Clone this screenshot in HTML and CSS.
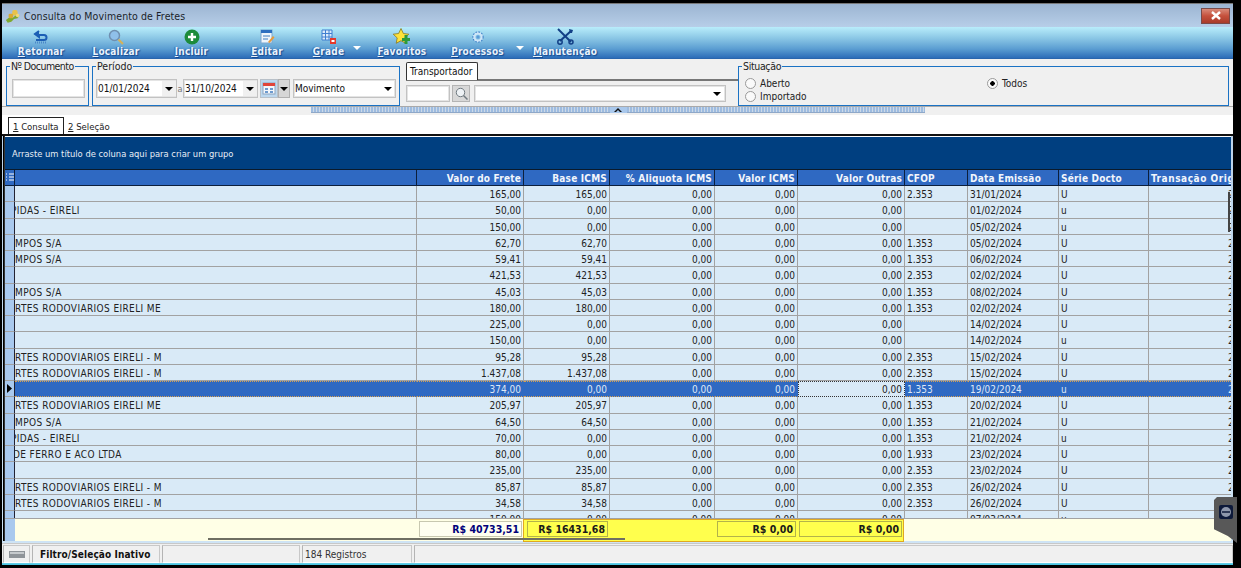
FILE: index.html
```html
<!DOCTYPE html>
<html lang="pt">
<head>
<meta charset="utf-8">
<title>Consulta do Movimento de Fretes</title>
<link rel="stylesheet" href="styles.css">
</head>
<body>
<div class="window">
  <header class="titlebar">
    <svg class="title-icon" width="18" height="15" viewBox="0 0 20 16"><path d="M1 13l5-4 2 2 5-4 3 1-2 3-4 1-3 3-4 1z" fill="#7fa82e"/><rect x="8" y="2" width="6" height="6" rx="2" fill="#e9c24a"/><rect x="4" y="6" width="5" height="5" rx="1.5" fill="#d9a92f"/><circle cx="14" cy="8" r="2" fill="#f0d878"/></svg>
    <span class="title-text">Consulta do Movimento de Fretes</span>
    <span class="close"><svg width="12" height="9" viewBox="0 0 12 9"><path d="M2 1l8 7M10 1l-8 7" stroke="#fff" stroke-width="2.4"/></svg></span>
  </header>

  <nav class="toolbar">
    <div class="tool w74"><svg width="16" height="15" viewBox="0 0 16 15"><path d="M6 1L2 4l4 3V5h5a2.500 2.500 0 0 1 0 5H3" fill="none" stroke="#1d5fb5" stroke-width="2"/><path d="M1 4l5-3v6z" fill="#1d5fb5"/><path d="M2 12.500h11" stroke="#4a86c8" stroke-width="2" stroke-dasharray="1 1"/></svg><span><u>R</u>etornar</span></div>
    <div class="tool w76"><svg width="16" height="16" viewBox="0 0 16 16"><circle cx="6.500" cy="6.500" r="5" fill="#8fc0ea" stroke="#6f8fb0" stroke-width="1.500"/><path d="M10.500 10.500L15 15" stroke="#d3b25a" stroke-width="2.200"/></svg><span><u>L</u>ocalizar</span></div>
    <div class="tool w75"><svg width="16" height="16" viewBox="0 0 16 16"><circle cx="8" cy="8" r="7.500" fill="#1d8b3b"/><path d="M8 4v8M4 8h8" stroke="#fff" stroke-width="2.400"/></svg><span><u>I</u>ncluir</span></div>
    <div class="tool w76"><svg width="16" height="16" viewBox="0 0 16 16"><rect x="2" y="1" width="11" height="13" fill="#eef5fb" stroke="#7da6cf"/><rect x="2" y="1" width="11" height="3" fill="#2d6fc0"/><path d="M4 7h7M4 10h5" stroke="#3f7cc0"/><path d="M9 13l5-6 1.500 1.500-5 5.500z" fill="#e8993a"/></svg><span><u>E</u>ditar</span></div>
    <div class="tool w47"><svg width="16" height="16" viewBox="0 0 16 16"><path d="M1 1h10v10H1z" fill="#dbeafa" stroke="#3f7fd0"/><path d="M4.500 1v10M8 1v10M1 4.500h10M1 8h10" stroke="#3f7fd0"/><rect x="9" y="9" width="6" height="6" fill="#e5382a"/><rect x="10.500" y="11" width="3" height="2" fill="#fff"/></svg><span><u>G</u>rade</span></div>
    <div class="drop"></div>
    <div class="tool w76"><svg width="18" height="17" viewBox="0 0 18 17"><path d="M8 .5l2.400 5 5.400.7-4 3.700 1 5.400L8 12.700 3.200 15.300l1-5.400-4-3.700 5.400-.7z" fill="#ffe23a" stroke="#8a7a20" stroke-width=".8"/><path d="M13 7v9M9 11.500h8" stroke="#2c9a3c" stroke-width="3"/></svg><span><u>F</u>avoritos</span></div>
    <div class="tool w75"><svg class="gear" width="12" height="12" viewBox="0 0 14 14"><circle cx="7" cy="7" r="4.500" fill="none" stroke="#cfe6f8" stroke-width="3"/><circle cx="7" cy="7" r="6" fill="none" stroke="#3d80c8" stroke-width="1.200" stroke-dasharray="2 1.500"/><circle cx="7" cy="7" r="2" fill="#5a9ad8"/></svg><span><u>P</u>rocessos</span></div>
    <div class="drop w14"></div>
    <div class="tool w72"><svg width="17" height="17" viewBox="0 0 17 17"><path d="M1 1l13 13" stroke="#123f86" stroke-width="2"/><circle cx="14" cy="14" r="2" fill="none" stroke="#123f86" stroke-width="1.500"/><path d="M14 3L3 13" stroke="#123f86" stroke-width="2"/><circle cx="3" cy="14" r="2.200" fill="none" stroke="#123f86" stroke-width="1.500"/><path d="M12 1l4 1-1 3-2 0z" fill="#123f86"/></svg><span><u>M</u>anutenção</span></div>
  </nav>

  <section class="filters">
    <fieldset class="group g-doc"><legend>Nº Documento</legend><span class="input w73i"></span></fieldset>
    <fieldset class="group g-per"><legend>Período</legend>
      <div class="per-row">
        <span class="input date d1">01/01/2024<i class="caret"></i></span>
        <span class="sep">a</span>
        <span class="input date d2">31/10/2024<i class="caret"></i></span>
        <span class="cal"><svg width="14" height="13" viewBox="0 0 14 13"><rect x="1" y="1" width="12" height="11" fill="#f4f7fb" stroke="#8ca4c0"/><rect x="1" y="1" width="12" height="3" fill="#e0453a"/><path d="M3 7h3M8 7h3M3 10h3M8 10h3" stroke="#3f7cc0" stroke-width="1.500"/></svg></span>
        <span class="cal-drop"><i class="caret"></i></span>
        <span class="input mov">Movimento<i class="caret"></i></span>
      </div>
    </fieldset>
    <div class="transp">
      <div class="transp-tabs"><span class="transp-tab">Transportador</span></div>
      <div class="transp-row">
        <span class="input t-code"></span>
        <span class="lookup"><svg width="13" height="13" viewBox="0 0 13 13"><circle cx="5.500" cy="5.500" r="4.200" fill="#eef2f5" stroke="#707a80"/><path d="M8.500 8.500L12.500 12.500" stroke="#707a80" stroke-width="1.500"/></svg></span>
        <span class="input t-name"><i class="caret"></i></span>
      </div>
    </div>
    <fieldset class="group g-sit"><legend>Situação</legend>
      <div class="sit-col">
        <label class="radio"><i class="dot"></i>Aberto</label>
        <label class="radio"><i class="dot"></i>Importado</label>
      </div>
      <label class="radio todos"><i class="dot on"></i>Todos</label>
    </fieldset>
  </section>

  <div class="splitter"><div class="split-bar"><span class="grip"></span><span class="split-btn"><svg width="8" height="5" viewBox="0 0 8 5"><path d="M4 0l4 4H6L4 2 2 4H0z" fill="#111"/></svg></span><span class="grip"></span></div></div>

  <div class="tabs">
    <span class="tab active"><u>1</u> Consulta</span>
    <span class="tab"><u>2</u> Seleção</span>
  </div>

  <main class="grid">
    <div class="groupbar">Arraste um título de coluna aqui para criar um grupo</div>
    <div class="row head"><span class="ind"><svg width="8" height="9" viewBox="0 0 8 9"><path d="M0 1h1M0 4h1M0 7h1M3 1h5M3 4h5M3 7h5" stroke="#fff"/></svg></span><span></span><span>Valor do Frete</span><span>Base ICMS</span><span>% Aliquota ICMS</span><span>Valor ICMS</span><span>Valor Outras</span><span>CFOP</span><span>Data Emissão</span><span>Série Docto</span><span class="clipl">Transação Origem</span></div>
    <div class="rows">
      <div class="row"><span class="ind"></span><span></span><span>165,00</span><span>165,00</span><span>0,00</span><span>0,00</span><span>0,00</span><span>2.353</span><span>31/01/2024</span><span>U</span><span class="last">2</span></div>
      <div class="row"><span class="ind"></span><span class="cut">PIDAS - EIRELI</span><span>50,00</span><span>0,00</span><span>0,00</span><span>0,00</span><span>0,00</span><span></span><span>01/02/2024</span><span>u</span><span class="last">2</span></div>
      <div class="row"><span class="ind"></span><span></span><span>150,00</span><span>0,00</span><span>0,00</span><span>0,00</span><span>0,00</span><span></span><span>05/02/2024</span><span>u</span><span class="last">2</span></div>
      <div class="row"><span class="ind"></span><span>MPOS S/A</span><span>62,70</span><span>62,70</span><span>0,00</span><span>0,00</span><span>0,00</span><span>1.353</span><span>05/02/2024</span><span>U</span><span class="last">2</span></div>
      <div class="row"><span class="ind"></span><span>MPOS S/A</span><span>59,41</span><span>59,41</span><span>0,00</span><span>0,00</span><span>0,00</span><span>1.353</span><span>06/02/2024</span><span>U</span><span class="last">2</span></div>
      <div class="row"><span class="ind"></span><span></span><span>421,53</span><span>421,53</span><span>0,00</span><span>0,00</span><span>0,00</span><span>2.353</span><span>02/02/2024</span><span>U</span><span class="last">2</span></div>
      <div class="row"><span class="ind"></span><span>MPOS S/A</span><span>45,03</span><span>45,03</span><span>0,00</span><span>0,00</span><span>0,00</span><span>1.353</span><span>08/02/2024</span><span>U</span><span class="last">2</span></div>
      <div class="row"><span class="ind"></span><span>RTES RODOVIARIOS EIRELI ME</span><span>180,00</span><span>180,00</span><span>0,00</span><span>0,00</span><span>0,00</span><span>1.353</span><span>02/02/2024</span><span>U</span><span class="last">2</span></div>
      <div class="row"><span class="ind"></span><span></span><span>225,00</span><span>0,00</span><span>0,00</span><span>0,00</span><span>0,00</span><span></span><span>14/02/2024</span><span>U</span><span class="last">2</span></div>
      <div class="row"><span class="ind"></span><span></span><span>150,00</span><span>0,00</span><span>0,00</span><span>0,00</span><span>0,00</span><span></span><span>14/02/2024</span><span>u</span><span class="last">2</span></div>
      <div class="row"><span class="ind"></span><span>RTES RODOVIARIOS EIRELI - M</span><span>95,28</span><span>95,28</span><span>0,00</span><span>0,00</span><span>0,00</span><span>2.353</span><span>15/02/2024</span><span>U</span><span class="last">2</span></div>
      <div class="row"><span class="ind"></span><span>RTES RODOVIARIOS EIRELI - M</span><span>1.437,08</span><span>1.437,08</span><span>0,00</span><span>0,00</span><span>0,00</span><span>2.353</span><span>15/02/2024</span><span>U</span><span class="last">2</span></div>
      <div class="row sel"><span class="ind"><svg width="5" height="9" viewBox="0 0 5 9"><path d="M0 0l5 4.500L0 9z" fill="#000"/></svg></span><span></span><span>374,00</span><span>0,00</span><span>0,00</span><span>0,00</span><span class="focus">0,00</span><span>1.353</span><span>19/02/2024</span><span>u</span><span class="last">2</span></div>
      <div class="row"><span class="ind"></span><span>RTES RODOVIARIOS EIRELI ME</span><span>205,97</span><span>205,97</span><span>0,00</span><span>0,00</span><span>0,00</span><span>1.353</span><span>20/02/2024</span><span>U</span><span class="last">2</span></div>
      <div class="row"><span class="ind"></span><span>MPOS S/A</span><span>64,50</span><span>64,50</span><span>0,00</span><span>0,00</span><span>0,00</span><span>1.353</span><span>21/02/2024</span><span>U</span><span class="last">2</span></div>
      <div class="row"><span class="ind"></span><span class="cut">PIDAS - EIRELI</span><span>70,00</span><span>0,00</span><span>0,00</span><span>0,00</span><span>0,00</span><span>1.353</span><span>21/02/2024</span><span>u</span><span class="last">2</span></div>
      <div class="row"><span class="ind"></span><span class="cut2">DE FERRO E ACO LTDA</span><span>80,00</span><span>0,00</span><span>0,00</span><span>0,00</span><span>0,00</span><span>1.933</span><span>23/02/2024</span><span>U</span><span class="last">2</span></div>
      <div class="row"><span class="ind"></span><span></span><span>235,00</span><span>235,00</span><span>0,00</span><span>0,00</span><span>0,00</span><span>2.353</span><span>23/02/2024</span><span>U</span><span class="last">2</span></div>
      <div class="row"><span class="ind"></span><span>RTES RODOVIARIOS EIRELI - M</span><span>85,87</span><span>85,87</span><span>0,00</span><span>0,00</span><span>0,00</span><span>2.353</span><span>26/02/2024</span><span>U</span><span class="last">2</span></div>
      <div class="row"><span class="ind"></span><span>RTES RODOVIARIOS EIRELI - M</span><span>34,58</span><span>34,58</span><span>0,00</span><span>0,00</span><span>0,00</span><span>2.353</span><span>26/02/2024</span><span>U</span><span class="last">2</span></div>
      <div class="row"><span class="ind"></span><span></span><span>150,00</span><span>0,00</span><span>0,00</span><span>0,00</span><span>0,00</span><span></span><span>07/03/2024</span><span>u</span><span class="last">2</span></div>
      <div class="edge-mark"></div>
    </div>
    <div class="footer">
      <span class="f-ind"></span>
      <span class="f-sum">R$ 40733,51</span>
      <div class="f-mark">
        <span class="f-box b1">R$ 16431,68</span>
        <span class="f-box b2">R$ 0,00</span>
        <span class="f-box b3">R$ 0,00</span>
      </div>
      <div class="f-line"></div>
    </div>
  </main>

  <footer class="status">
    <span class="p p1"><svg width="16" height="7" viewBox="0 0 16 7"><rect width="16" height="7" fill="#8f9499"/><rect x="1" y="1" width="14" height="2" fill="#c6cacd"/></svg></span>
    <span class="p p2">Filtro/Seleção Inativo</span>
    <span class="p p3"></span>
    <span class="p p4">184 Registros</span>
    <span class="p p5"></span>
  </footer>

  <aside class="tv"><span class="tv-box"><svg width="14" height="14" viewBox="0 0 14 14"><rect width="14" height="14" rx="2" fill="#0e1a3a"/><circle cx="7" cy="7" r="5" fill="#8f98ab"/><path d="M3 7h8" stroke="#0e1a3a" stroke-width="1.500"/></svg></span></aside>
</div>
</body>
</html>
```

FILE: styles.css
```css
* { box-sizing: border-box; }
html, body { margin: 0; padding: 0; height: 568px; overflow: hidden; background: #000; }
body { font-family: "DejaVu Sans Condensed", "DejaVu Sans", sans-serif; font-size: 10px; color: #111; }
.window { position: relative; width: 1231px; height: 562px; margin: 3px 0 0 2px; padding: 0 2px 2px 3px; background: linear-gradient(#b5cde6, #cfe4f5 99%, #3ec3e0); border-top: 1px solid #777; display: flex; flex-direction: column; }

.titlebar { height: 23px; margin: 0 -2px 0 -3px; padding: 0 3px; background: linear-gradient(#9cb5d2, #b7cee8); display: flex; align-items: center; flex: none; }
.title-icon { margin-right: 1px; flex: none; }
.title-text { font-size: 10.5px; letter-spacing: .1px; color: #1a1f2b; flex: 1; }
.close { width: 29px; height: 16px; background: linear-gradient(#d98a78, #c5503c 50%, #a83c2a); border: 1px solid #7a4a48; display: flex; align-items: center; justify-content: center; }

.toolbar { height: 32px; margin: 0 -2px 0 -3px; padding-left: 2px; background: linear-gradient(#b9edfb, #8cc8e6 35%, #5c9ed2 70%, #2c6cb8); display: flex; flex: none; border-bottom: 1px solid #2a65ad; }
.tool { display: flex; flex-direction: column; align-items: center; justify-content: flex-end; height: 31px; flex: none; }
.tool svg { flex: none; }
.tool .gear { margin-bottom: 2px; }
.tool span { font-size: 10px; font-weight: bold; letter-spacing: .2px; color: #eaf3fb; text-shadow: 1px 1px 1px #154a92, -1px 0 1px #2d68ae; line-height: 13px; }
.w74 { width: 74px; } .w76 { width: 76px; } .w75 { width: 75px; } .w47 { width: 47px; } .w72 { width: 72px; }
.drop { width: 12px; flex: none; position: relative; }
.w14 { width: 14px; }
.drop::after { content: ""; position: absolute; left: 1px; top: 19px; border: 4px solid transparent; border-top: 4px solid #fff; border-bottom: 0; }

.filters { height: 48px; margin: 0 -2px 0 -3px; padding: 1px 3px 0 4px; background: #f0f0f0; display: flex; flex: none; border-bottom: 1px solid #aaa; }
.group { margin: 0; height: 46px; padding: 0; border: 1px solid #1a72c4; min-width: 0; position: relative; }
.group legend { font-size: 10.5px; line-height: 13px; padding: 0 1px; color: #222; white-space: nowrap; }
.g-doc { width: 83px; margin-right: 3px; padding: 6px 5px 0; }
.g-doc legend { margin-left: -2px; letter-spacing: -.55px; }
.g-per { width: 308px; margin-right: 6px; padding: 6px 3px 0; }
.g-sit { width: 491px; display: flex; padding: 4px 6px 0; }
.g-sit legend { margin-left: -3px; letter-spacing: -.35px; }
.input { display: flex; align-items: center; height: 19px; background: #fff; border: 1px solid #c2c2c2; box-shadow: inset 0 0 0 1px #e4e4e4; padding-left: 1px; font-size: 10px; position: relative; }
.w73i { width: 73px; }
.per-row { display: flex; align-items: center; }
.d1 { width: 81px; }
.d2 { width: 75px; }
.sep { width: 6px; text-align: center; color: #777; font-size: 9px; }
.caret { position: absolute; right: 3px; top: 7px; border: 4px solid transparent; border-top: 4px solid #000; border-bottom: 0; }
.date::after { content: ""; position: absolute; right: 0; top: 1px; bottom: 1px; width: 14px; background: #f0f0f0; z-index: 0; }
.date .caret, .mov .caret, .t-name .caret { z-index: 1; }
.cal { width: 18px; height: 19px; margin-left: 2px; background: #bcd8ef; border: 1px solid #b8c0c8; display: flex; align-items: center; justify-content: center; }
.cal-drop { width: 12px; height: 19px; background: #d6d6d6; border: 1px solid #b0b0b0; position: relative; }
.cal-drop .caret { right: 1px; }
.mov { width: 103px; margin-left: 3px; }
.transp { width: 332px; height: 46px; display: flex; flex-direction: column; flex: none; }
.transp-tabs { height: 19px; margin-top: 2px; border-bottom: 2px solid #777; display: flex; flex: none; }
.transp-tab { width: 72px; height: 18px; padding: 3px 0 0 3px; font-size: 10px; background: #fff; border: 1px solid #333; border-bottom: 0; border-radius: 2px 2px 0 0; white-space: nowrap; }
.transp-row { display: flex; align-items: center; margin-top: 4px; height: 17px; }
.t-code { width: 44px; height: 17px; }
.lookup { width: 18px; height: 17px; margin-left: 2px; background: #d8d8d8; border: 1px solid #b4b4b4; display: flex; align-items: center; justify-content: center; }
.t-name { width: 252px; height: 17px; margin-left: 4px; }
.t-name .caret { right: 4px; top: 6px; }
.sit-col { width: 242px; display: flex; flex-direction: column; }
.radio { display: flex; align-items: center; height: 13px; font-size: 10px; color: #222; }
.dot { width: 11px; height: 11px; border-radius: 50%; border: 1px solid #9a9a9a; background: #fafafa; margin-right: 4px; flex: none; }
.dot.on { background: radial-gradient(circle, #000 0 2px, #fafafa 2.5px); }

.splitter { height: 8px; margin: 0 -2px 0 -3px; background: #f0f0f0; display: flex; flex: none; padding-left: 309px; }
.split-bar { width: 614px; height: 6px; display: flex; }
.grip { flex: 1; background: repeating-linear-gradient(90deg, #9ebce0 0 2px, #ccd9e8 2px 3px); border-bottom: 1px solid #8fa8c8; }
.split-btn { width: 17px; background: #a9c8ec; display: flex; align-items: center; justify-content: center; }

.tabs { height: 21px; margin: 0 -2px 0 -3px; padding: 2px 0 0 6px; background: #fff; display: flex; flex: none; border-bottom: 2px solid #111; font-size: 9.5px; }
.tab { height: 17px; padding: 4px 4px 0; line-height: 12px; color: #222; white-space: nowrap; }
.tab.active { width: 56px; border: 1px solid #222; border-bottom: 0; background: #fff; height: 17px; padding: 3px 0 0 4px; }

.grid { flex: none; width: 1226px; padding-top: 1px; display: flex; flex-direction: column; position: relative; background: #fff; box-shadow: -1px 0 #333, -2px 0 #000; }
.groupbar { height: 33px; background: #003f80; color: #e8eef6; padding: 10px 0 0 7px; font-size: 9.3px; line-height: 13px; border-bottom: 1px solid #0a1a2c; }
.row { display: grid; grid-template-columns: 10px 402px 107px 86px 105px 83px 107px 63px 91px 90px 82px; height: 16.25px; background: #d9eaf7; }
.row > span { display: block; height: 100%; overflow: hidden; white-space: nowrap; padding: 1px 2px 0; line-height: 15px; text-align: right; border-right: 1px solid #a2a2a2; border-bottom: 1px solid #a2a2a2; color: #222; }
.row > span:nth-child(2) { text-align: left; padding-left: 0; letter-spacing: .38px; }
.row > span:nth-child(8), .row > span:nth-child(9), .row > span:nth-child(10) { text-align: left; padding-left: 2px; }
.row > .ind { background: #a9c9ee; padding: 0; display: flex; align-items: center; justify-content: center; border-right-color: #223; }
.row > .last { padding-right: 0; border-right: 0; text-indent: 77px; text-align: left; }
.row > .cut { text-indent: -4px; }
.row > .cut2 { text-indent: -2px; }
.head { height: 16px; background: #2f69c2; }
.head > span { background: #2f69c2; font-weight: bold; font-size: 10px; letter-spacing: .2px; border-right: 1px solid #0c1f3c; border-bottom: 1px solid #0c1f3c; }
.row.head > .ind { background: #2f69c2; border-right-color: #0c1f3c; }
.row.head > .clipl { border-right: 0; padding-left: 2px; text-align: left; text-indent: 0; letter-spacing: .55px; }
.row.head > span { color: #f2f6fc; }
.rows { height: 332px; overflow: hidden; position: relative; }
.sel { background: #2f69c2; }
.row.sel > span { background: #2f69c2; color: #dfe8f6; padding-top: 0; border-top: 1px dotted #d8a050; border-bottom: 1px dotted #d8a050; border-right-color: #2f69c2; }
.row.sel > .focus { background: #d9eaf7; color: #222; border: 1px dotted #333; }
.row.sel > .ind { background: #a9c9ee; border-top: 0; border-bottom: 1px solid #a2a2a2; border-right-color: #223; justify-content: flex-start; padding-left: 2px; }
.edge-mark { position: absolute; right: 1px; top: 6px; width: 2px; height: 40px; background: #444; }

.footer { height: 23px; background: #ffffe6; display: grid; grid-template-columns: 10px 401px 107px 381px; position: relative; border-top: 1px solid #a2a2a2; }
.f-ind { background: #a9c9ee; }
.f-sum { grid-column: 3; margin: 2px 1px 3px 3px; height: 16px; border: 1px solid #c8c8b0; background: #fffff0; color: #00007a; font-weight: bold; font-size: 10.5px; text-align: right; line-height: 14px; padding-right: 2px; }
.f-mark { grid-column: 4; background: #ffff4d; border: 1px solid #e0a820; display: flex; margin-bottom: -1px; padding-top: 1px; }
.f-box { height: 16px; border: 1px solid #b3b34a; font-weight: bold; font-size: 10.5px; text-align: right; line-height: 14px; padding-right: 2px; color: #1a1a1a; white-space: nowrap; }
.b1 { width: 81px; margin-left: 3px; }
.b2 { width: 79px; margin-left: 109px; }
.b3 { width: 103px; margin-left: 3px; }
.f-line { position: absolute; left: 203px; top: 19px; width: 417px; height: 2px; background: #6f6f62; }

.status { height: 20px; margin: 2px -2px 0 -3px; padding: 1px 0 0 1px; background: #f0f0f0; border-top: 1px solid #c8c8c8; display: flex; flex: none; gap: 2px; }
.p { height: 18px; display: flex; align-items: center; border: 1px solid #fff; border-left-color: #b4b4b4; border-top-color: #c8c8c8; border-right-color: #c8c8c8; font-size: 10px; color: #333; white-space: nowrap; }
.p1 { width: 27px; justify-content: center; }
.p2 { width: 128px; font-weight: bold; letter-spacing: .1px; color: #111; padding-left: 7px; }
.p3 { width: 138px; }
.p4 { width: 110px; padding-left: 2px; }
.p5 { flex: 1; }

.tv { position: absolute; right: -4px; top: 493px; width: 23px; height: 46px; background: #585858; clip-path: polygon(3px 0, 100% 0, 100% 100%, 60% 85%, 0 70%, 0 3px); display: flex; justify-content: center; padding-top: 8px; }
.tv-box { display: block; width: 14px; height: 14px; }
```
